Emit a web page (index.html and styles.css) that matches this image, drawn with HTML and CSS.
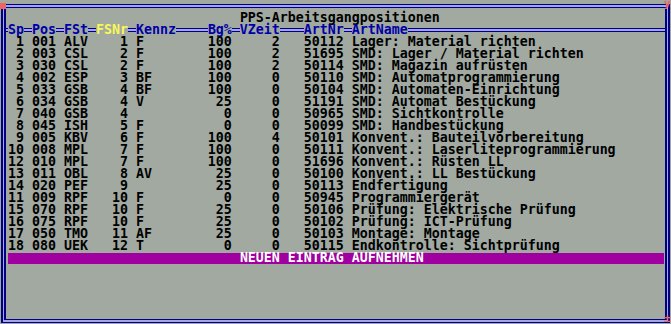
FILE: index.html
```html
<!DOCTYPE html>
<html>
	<head>
		<meta charset="UTF-8">
		<title>PPS-Arbeitsgangpositionen</title>
		<link rel="stylesheet" href="styles.css">
	</head>
	<body>
		<div class="screen">
			<span class="mark mark-tl"></span>
			<span class="mark mark-tr">ÿ</span>
			<span class="mark mark-br">±</span>
			<div class="outer">
				<div class="frame">
					<div class="title">PPS-Arbeitsgangpositionen</div>
					<div class="head">
						<i class="dl lead"></i><b>Sp</b><i class="dl"></i><b>Pos</b><i class="dl"></i><b>FSt</b><i class="dl"></i><b class="hi">FSNr</b><i class="dl"></i><b>Kennz</b><i class="dl w4"></i><b>Bg%</b><i class="dl"></i><b>VZeit</b><i class="dl w3"></i><b>ArtNr</b><i class="dl"></i><b>ArtName</b><i class="dl fill"></i>
					</div>
					<div class="rec"><span>1</span><span>001</span><span>ALV</span><span>1</span><span>F</span><span>100</span><span>2</span><span>50112</span><span>Lager: Material richten</span></div>
					<div class="rec"><span>2</span><span>003</span><span>CSL</span><span>2</span><span>F</span><span>100</span><span>2</span><span>51695</span><span>SMD: Lager / Material richten</span></div>
					<div class="rec"><span>3</span><span>030</span><span>CSL</span><span>2</span><span>F</span><span>100</span><span>2</span><span>50114</span><span>SMD: Magazin aufrüsten</span></div>
					<div class="rec"><span>4</span><span>002</span><span>ESP</span><span>3</span><span>BF</span><span>100</span><span>0</span><span>50110</span><span>SMD: Automatprogrammierung</span></div>
					<div class="rec"><span>5</span><span>033</span><span>GSB</span><span>4</span><span>BF</span><span>100</span><span>0</span><span>50104</span><span>SMD: Automaten-Einrichtung</span></div>
					<div class="rec"><span>6</span><span>034</span><span>GSB</span><span>4</span><span>V</span><span>25</span><span>0</span><span>51191</span><span>SMD: Automat Bestückung</span></div>
					<div class="rec"><span>7</span><span>040</span><span>GSB</span><span>4</span><span></span><span>0</span><span>0</span><span>50965</span><span>SMD: Sichtkontrolle</span></div>
					<div class="rec"><span>8</span><span>045</span><span>ISH</span><span>5</span><span>F</span><span>0</span><span>0</span><span>50099</span><span>SMD: Handbestückung</span></div>
					<div class="rec"><span>9</span><span>005</span><span>KBV</span><span>6</span><span>F</span><span>100</span><span>4</span><span>50101</span><span>Konvent.: Bauteilvorbereitung</span></div>
					<div class="rec"><span>10</span><span>008</span><span>MPL</span><span>7</span><span>F</span><span>100</span><span>0</span><span>50111</span><span>Konvent.: Laserliteprogrammierung</span></div>
					<div class="rec"><span>12</span><span>010</span><span>MPL</span><span>7</span><span>F</span><span>100</span><span>0</span><span>51696</span><span>Konvent.: Rüsten LL</span></div>
					<div class="rec"><span>13</span><span>011</span><span>OBL</span><span>8</span><span>AV</span><span>25</span><span>0</span><span>50100</span><span>Konvent.: LL Bestückung</span></div>
					<div class="rec"><span>14</span><span>020</span><span>PEF</span><span>9</span><span></span><span>25</span><span>0</span><span>50113</span><span>Endfertigung</span></div>
					<div class="rec"><span>11</span><span>009</span><span>RPF</span><span>10</span><span>F</span><span>0</span><span>0</span><span>50945</span><span>Programmiergerät</span></div>
					<div class="rec"><span>15</span><span>070</span><span>RPF</span><span>10</span><span>F</span><span>25</span><span>0</span><span>50106</span><span>Prüfung: Elektrische Prüfung</span></div>
					<div class="rec"><span>16</span><span>075</span><span>RPF</span><span>10</span><span>F</span><span>25</span><span>0</span><span>50102</span><span>Prüfung: ICT-Prüfung</span></div>
					<div class="rec"><span>17</span><span>050</span><span>TMO</span><span>11</span><span>AF</span><span>25</span><span>0</span><span>50103</span><span>Montage: Montage</span></div>
					<div class="rec"><span>18</span><span>080</span><span>UEK</span><span>12</span><span>T</span><span>0</span><span>0</span><span>50115</span><span>Endkontrolle: Sichtprüfung</span></div>
					<div class="add">NEUEN EINTRAG AUFNEHMEN</div>
				</div>
			</div>
		</div>
	</body>
</html>
```
FILE: styles.css
```css
body{
	margin:0;
	background:#a1a9a1;
}
.screen{
	position:relative;
	width:671px;
	height:324px;
	overflow:hidden;
	background:#a1a9a1;
	padding-top:4px;
	box-sizing:border-box;
	font-family:"DejaVu Sans Mono",monospace;
	font-weight:bold;
	font-size:13.29px;
	color:#000;
}
.outer{
	margin:0 1px 0 1px;
	border-style:solid;
	border-color:#000080;
	border-width:1px 2px;
	padding:2px 1px;
	background:#a4a4ec;
}
.frame{
	height:307px;
	border-style:solid;
	border-color:#000080;
	border-width:1px 2px;
	background:#a1a9a1;
	padding-top:4px;
	box-sizing:content-box;
}
.frame > div{
	height:12px;
	line-height:12px;
	white-space:pre;
}
.title{
	padding-left:calc(29ch + 2px);
}
.head{
	display:flex;
	color:#0000a8;
}
.head b{
	flex:none;
}
.head .hi{
	color:#f8f858;
}
.dl{
	flex:none;
	width:1ch;
	height:2px;
	margin-top:4px;
	border-top:1px solid #000080;
	border-bottom:1px solid #000080;
	background:#a4a4ec;
}
.dl.lead{
	width:2px;
}
.dl.w3{
	width:3ch;
}
.dl.w4{
	width:4ch;
}
.dl.fill{
	flex:1;
}
.rec{
	display:grid;
	grid-template-columns:3ch 4ch 3ch 5ch 10ch 3ch 6ch 8ch auto;
	padding-left:2px;
}
.rec span{
	box-sizing:border-box;
}
.rec span:nth-child(1){
	text-align:right;
	padding-right:1ch;
}
.rec span:nth-child(4),
.rec span:nth-child(6),
.rec span:nth-child(7){
	text-align:right;
}
.rec span:nth-child(5),
.rec span:nth-child(9){
	padding-left:1ch;
}
.rec span:nth-child(8){
	padding-left:3ch;
}
.frame > .add{
	margin:1px 1px 0 2px;
	height:11px;
	line-height:10px;
	background:#a000a0;
	color:#fff;
	padding-left:29ch;
}
.mark{
	position:absolute;
	color:#ec6464;
	font-size:11px;
	line-height:11px;
}
.mark-tl{
	left:0;
	top:3px;
	width:6px;
	height:6px;
	background:#ec6464;
}
.mark-tr{
	left:664px;
	top:-2px;
}
.mark-br{
	left:664px;
	top:313px;
}
```
